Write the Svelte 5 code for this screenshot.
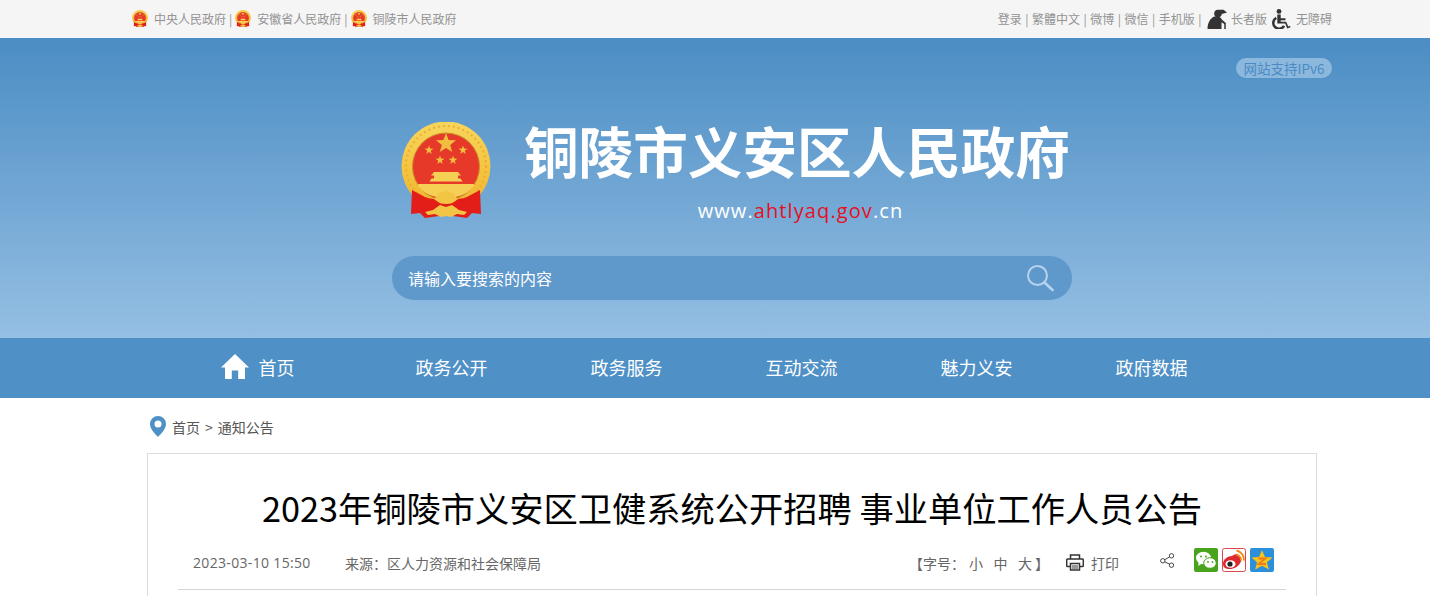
<script>
  const govLinks = ["中央人民政府", "安徽省人民政府", "铜陵市人民政府"];
  const toolLinks = ["登录", "繁體中文", "微博", "微信", "手机版"];
  const navItems = ["首页", "政务公开", "政务服务", "互动交流", "魅力义安", "政府数据"];
</script>

<svg class="defs" width="0" height="0" aria-hidden="true">
  <defs>
    <linearGradient id="ring" x1="0" y1="0" x2="0" y2="1">
      <stop offset="0" stop-color="#f7d65c" />
      <stop offset="0.6" stop-color="#f4c23c" />
      <stop offset="1" stop-color="#eeb030" />
    </linearGradient>
    <symbol id="emblem" viewBox="0 0 90 96">
      <circle cx="45" cy="44" r="44.500" fill="url(#ring)" />
      <circle cx="45" cy="44" r="40" fill="none" stroke="#eaae34" stroke-width="2" stroke-dasharray="2 3" />
      <circle cx="45" cy="44.500" r="33.500" fill="#e6392a" stroke="#c98f2a" stroke-width="1" />
      <polygon fill="#f0bd3e" points="45,11 47.600,18 55,18.300 49.200,22.900 51.200,30 45,25.900 38.800,30 40.800,22.900 35,18.300 42.400,18" />
      <polygon fill="#f0bd3e" points="28,23.500 29.100,26.600 32.400,26.700 29.800,28.700 30.700,31.900 28,30 25.300,31.900 26.200,28.700 23.600,26.700 26.900,26.600" />
      <polygon fill="#f0bd3e" points="62,23.500 63.100,26.600 66.400,26.700 63.800,28.700 64.700,31.900 62,30 59.300,31.900 60.200,28.700 57.600,26.700 60.900,26.600" />
      <polygon fill="#f0bd3e" points="39,33.500 40.100,36.600 43.400,36.700 40.800,38.700 41.700,41.900 39,40 36.300,41.900 37.200,38.700 34.600,36.700 37.900,36.600" />
      <polygon fill="#f0bd3e" points="52,33.500 53.100,36.600 56.400,36.700 53.800,38.700 54.700,41.900 52,40 49.300,41.900 50.200,38.700 47.600,36.700 50.900,36.600" />
      <path fill="#f6cf55" d="M33 50h24l3 3.500h-3v3h2.500l2 3H28.500l2-3H33v-3h-3z" />
      <path fill="#f6cf55" d="M17 62h56v2c-6 8-16 12-28 12s-22-4-28-12z" />
      <rect x="24" y="60" width="42" height="2" fill="#e6392a" />
      <path fill="#e31e19" d="M11 68l13 7c7 3.500 35 3.500 42 0l13-7 1 24-9-1-5 5-21-3-21 3-5-5-9 1z" />
      <path fill="#f3c544" d="M45 68l3.500 2.500 4.500.5 1 3.500 3 2.500-4 3-3 1.500-5 .5-5-.5-3-1.500-4-3 3-2.500 1-3.500 4.500-.5z" />
      <path fill="#f3c544" d="M24 90l8-2 7-5 6 2 6-2 7 5 8 2-3 3-7-1-6 3-5-1-5 1-6-3-7 1z" />
    </symbol>
  </defs>
</svg>

<div class="topbar">
  <div class="top-inner">
    <div class="top-group">
      {#each govLinks as name, i}
        {#if i > 0}<span class="sep">|</span>{/if}
        <svg class="mini-emblem"><use href="#emblem" /></svg>
        <span class="top-link">{name}</span>
      {/each}
    </div>
    <div class="top-group tools">
      {#each toolLinks as name}
        <span class="tool">{name}</span><span class="sep">|</span>
      {/each}
      <svg class="care-icon" viewBox="0 0 20 20">
        <circle cx="11" cy="4.500" r="3.800" fill="#333" />
        <path fill="#333" d="M12 .8h4.500L20 3.500l-5 1.500zM7.500 7.500c3.500-1 6.500.3 7.300 3l4 3.500-1.200 1.300-3.100-2.100V20H.5c0-3.500.8-6 2-8 1-2 2.500-3.500 5-4.500z" />
        <path fill="none" stroke="#333" stroke-width="1.500" d="M18 14v6" />
      </svg>
      <span class="top-link">长者版</span>
      <svg class="access-icon" viewBox="0 0 20 20">
        <circle cx="8" cy="2.400" r="2.400" fill="#333" />
        <path fill="#333" d="M6.300 5.500h3.400v3.800h4.800v2H9.700v1.500h5.500l2 4.700 1.800-.7.500 1.500-3.300 1.300-2-5H6.300z" />
        <path fill="none" stroke="#333" stroke-width="2.500" d="M5.300 8.800a5.800 5.800 0 1 0 7.800 8" />
      </svg>
      <span class="top-link">无障碍</span>
    </div>
  </div>
</div>

<header class="banner">
  <div class="ipv6-row"><span class="ipv6">网站支持IPv6</span></div>
  <div class="brand">
    <svg class="emblem"><use href="#emblem" /></svg>
    <div class="brand-text">
      <h1>铜陵市义安区人民政府</h1>
      <p class="url">www.<span class="red">ahtlyaq.gov</span>.cn</p>
    </div>
  </div>
  <div class="search">
    <span>请输入要搜索的内容</span>
    <svg class="search-icon" viewBox="0 0 28 28">
      <circle cx="11.500" cy="11.500" r="9.500" fill="none" stroke="#b5d3ec" stroke-width="2" />
      <path d="M18.500 18.500l8 7.500" stroke="#b5d3ec" stroke-width="2.600" stroke-linecap="round" />
    </svg>
  </div>
</header>

<nav class="nav">
  {#each navItems as item, i}
    <span class="nav-item">
      {#if i === 0}
        <svg class="home-icon" viewBox="0 0 28 25">
          <path fill="#fff" d="M14 0L28 13.500h-4V25h-6.800v-8.500h-6.400V25H4V13.500H0z" />
        </svg>
      {/if}
      {item}
    </span>
  {/each}
</nav>

<main class="content">
  <div class="crumb">
    <svg class="pin" viewBox="0 0 16 21">
      <path fill="#4f90c6" fill-rule="evenodd" d="M8 0a8 8 0 0 1 8 8c0 4.500-4.500 9.500-8 13-3.500-3.500-8-8.500-8-13a8 8 0 0 1 8-8zm0 4.500a3.500 3.500 0 1 0 0 7 3.500 3.500 0 0 0 0-7z" />
    </svg>
    <span>首页</span><span class="gt">&gt;</span><span>通知公告</span>
  </div>

  <article class="card">
    <h2>2023年铜陵市义安区卫健系统公开招聘 事业单位工作人员公告</h2>
    <div class="meta">
      <span class="date">2023-03-10 15:50</span>
      <span class="source">来源：区人力资源和社会保障局</span>
      <span class="font-size">【字号：<b>小</b><b>中</b><b>大</b>】</span>
      <span class="print">
        <svg class="print-icon" viewBox="0 0 18 17">
          <path fill="none" stroke="#333" stroke-width="1.500" d="M4.500 5V1h9v4M4.500 12.500H1.500a.8.800 0 0 1-.8-.8V6a1 1 0 0 1 1-1h14.600a1 1 0 0 1 1 1v5.700a.8.800 0 0 1-.8.800h-3M4.500 9.500h9V16h-9z" />
          <path stroke="#333" d="M6 12h6M6 14h6" />
        </svg>
        打印
      </span>
      <svg class="share-icon" viewBox="0 0 15 15">
        <g fill="none" stroke="#444" stroke-width="1">
          <circle cx="11.500" cy="2.800" r="2.200" />
          <circle cx="2.800" cy="7.800" r="2.200" />
          <circle cx="11.500" cy="12.200" r="2.200" />
          <path d="M4.800 6.700l4.800-2.800M4.800 8.800l4.800 2.400" />
        </g>
      </svg>
      <div class="shares">
        <svg viewBox="0 0 24 24">
          <rect width="24" height="24" rx="2" fill="#4aa31c" />
          <ellipse cx="9.500" cy="10" rx="7.500" ry="6.300" fill="#fff" />
          <path fill="#fff" d="M5 14l-1 4 4-2.500z" />
          <ellipse cx="16" cy="15" rx="6.300" ry="5.300" fill="#fff" stroke="#4aa31c" />
          <circle cx="7" cy="8.500" r="1" fill="#4aa31c" /><circle cx="12" cy="8.500" r="1" fill="#4aa31c" />
          <circle cx="14" cy="14" r=".9" fill="#4aa31c" /><circle cx="18.500" cy="14" r=".9" fill="#4aa31c" />
        </svg>
        <svg viewBox="0 0 24 24">
          <rect x=".5" y=".5" width="23" height="23" rx="2" fill="#fff" stroke="#d9474b" />
          <path fill="#dd2a2f" d="M10 8c3.500-2.500 6-2 6.500 0 3 1 3.500 3.500 2 6.500-2 4-7 7-12 6.500S.5 17.500 1.200 14C2 11 6 8 10 8z" />
          <ellipse cx="8.500" cy="16" rx="5" ry="3.800" fill="#fff" />
          <circle cx="8" cy="16" r="2.600" fill="#222" />
          <path fill="none" stroke="#f08a1d" stroke-width="1.800" d="M14 6.500a5.500 5.500 0 0 1 5 6M14.500 2.500a9.500 9.500 0 0 1 7.500 10" />
        </svg>
        <svg viewBox="0 0 24 24">
          <rect width="24" height="24" rx="2" fill="#2b8fdc" />
          <polygon fill="#f6c31c" points="12,2 15,9 22.500,9.500 17,14.300 18.800,21.500 12,17.800 5.200,21.500 7,14.300 1.500,9.500 9,9" />
          <path fill="none" stroke="#ec7d17" stroke-width="1.800" d="M8.500 10.500h7l-7 5.500h7.500" />
        </svg>
      </div>
    </div>
  </article>
</main>

<style>
  :global(body) {
    margin: 0;
    background: #fff;
    font-family: "Noto Sans CJK SC", "Open Sans", sans-serif;
    overflow: hidden;
  }
  .defs {
    position: absolute;
  }
  .topbar {
    height: 38px;
    background: #f5f5f5;
  }
  .top-inner {
    margin-left: 132px;
    width: 1200px;
    height: 37px;
    padding-bottom: 1px;
    display: flex;
    justify-content: space-between;
    align-items: center;
    font-size: 12px;
    color: #939393;
  }
  .top-group {
    display: flex;
    align-items: center;
  }
  .mini-emblem {
    width: 16px;
    height: 17px;
  }
  .top-link {
    margin-left: 6px;
  }
  .sep {
    margin: 0 3px;
  }
  .tools .sep {
    margin: 0 3.500px;
  }
  .care-icon {
    width: 20px;
    height: 20px;
    margin-left: 2px;
    margin-right: -2px;
  }
  .access-icon {
    width: 20px;
    height: 20px;
    margin-left: 4px;
    margin-right: -1px;
  }
  .banner {
    height: 300px;
    box-sizing: border-box;
    background: linear-gradient(#4b8dc4, #95bfe3);
    padding-top: 20px;
  }
  .ipv6-row {
    margin-left: 132px;
    width: 1200px;
    display: flex;
    justify-content: flex-end;
  }
  .ipv6 {
    width: 96px;
    height: 20px;
    line-height: 20px;
    text-align: center;
    border-radius: 10px;
    background: #8db8de;
    color: #4a8bc3;
    font-size: 13.500px;
  }
  .brand {
    margin: 44px 0 0 401px;
    display: flex;
    height: 118px;
  }
  .emblem {
    width: 90px;
    height: 96px;
  }
  .brand-text {
    margin-left: 33px;
    width: 547px;
  }
  h1 {
    margin: 0;
    font-size: 54.600px;
    line-height: 56px;
    font-weight: 700;
    color: #fff;
    white-space: nowrap;
  }
  .url {
    margin: 20px 0 0;
    padding-left: 6px;
    text-align: center;
    font-family: "Open Sans", sans-serif;
    font-size: 20px;
    line-height: 26px;
    letter-spacing: 1.100px;
    color: #fff;
  }
  .red {
    color: #e60f1f;
  }
  .search {
    margin: 16px 0 0 392px;
    width: 680px;
    height: 44px;
    box-sizing: border-box;
    border-radius: 22px;
    padding: 0 18px 0 16px;
    background: #5f98ca;
    color: #fff;
    font-size: 16px;
    display: flex;
    justify-content: space-between;
    align-items: center;
  }
  .search-icon {
    width: 28px;
    height: 28px;
  }
  .nav {
    height: 60px;
    box-sizing: border-box;
    background: #4f90c6;
    padding: 0 0 2px 189px;
    display: flex;
    align-items: center;
    color: #fff;
    font-size: 18px;
  }
  .nav-item {
    position: relative;
    width: 175px;
    text-align: center;
  }
  .home-icon {
    position: absolute;
    left: 32px;
    top: 0;
    width: 28px;
    height: 25px;
  }
  .content {
    margin-left: 147px;
    width: 1170px;
  }
  .crumb {
    height: 55px;
    box-sizing: border-box;
    padding: 2px 0 0 3px;
    display: flex;
    align-items: center;
    font-size: 14px;
    color: #555;
  }
  .pin {
    width: 16px;
    height: 21px;
    margin-right: 6px;
  }
  .gt {
    margin: 0 5px;
  }
  .card {
    box-sizing: border-box;
    height: 200px;
    border: 1px solid #ddd;
    padding: 28px 30px 0;
  }
  h2 {
    margin: 0;
    text-align: center;
    font-size: 34.250px;
    line-height: 50px;
    font-weight: 400;
    color: #000;
    white-space: nowrap;
  }
  .meta {
    margin-top: 4px;
    height: 53px;
    border-bottom: 1px solid #d5d5d5;
    padding-left: 15px;
    display: flex;
    align-items: center;
    font-size: 14px;
    color: #666;
  }
  .date {
    width: 152px;
    font-family: "Open Sans", sans-serif;
    letter-spacing: .33px;
  }
  .source {
    width: 564px;
  }
  .font-size {
    width: 157px;
    white-space: nowrap;
  }
  .font-size b {
    font-weight: 400;
    margin-left: 10.500px;
  }
  .font-size b:first-of-type {
    margin-left: 4px;
  }
  .font-size b:last-of-type {
    margin-right: 3px;
  }
  .print {
    width: 94px;
    display: flex;
    align-items: center;
    gap: 7px;
  }
  .print-icon {
    width: 18px;
    height: 17px;
  }
  .share-icon {
    width: 15px;
    height: 15px;
    margin-top: -4px;
  }
  .shares {
    margin-left: 19px;
    margin-top: -6px;
    display: flex;
    gap: 4px;
  }
  .shares svg {
    width: 24px;
    height: 24px;
  }
</style>
